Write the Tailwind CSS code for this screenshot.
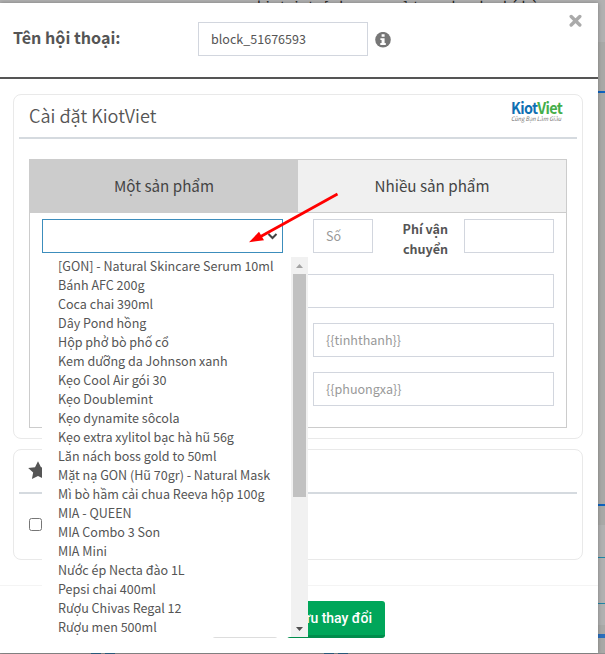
<!DOCTYPE html>
<html lang="vi">
<head>
<meta charset="utf-8">
<title>KiotViet</title>
<script src="https://cdn.jsdelivr.net/npm/@tailwindcss/browser@4"></script>
</head>
<body class="relative w-[605px] h-[654px] overflow-hidden bg-[#a9a9a7] text-[#555] font-['Noto_Sans_CJK_JP','Noto_Sans',sans-serif] text-[12.55px]">
<!-- dimmed page behind the dialog -->
<div class="absolute inset-x-0 top-0 h-[42px] bg-[#b1b1b1]"></div>
<div class="absolute left-[257px] top-[-3px] text-[14px] leading-[18px] tracking-[1.05px] text-[#222] whitespace-nowrap w-[300px]">kiotviet, [phuongxa] tạo nhanh phí hàng</div>
<div class="absolute right-0 top-[91px] w-[8px] h-[2px] bg-[#0d62bf]"></div>
<div class="absolute right-0 top-[504px] w-[8px] h-[2px] bg-[#0d62bf]"></div>
<div class="absolute right-0 top-[525px] w-[8px] h-[100px] bg-[#b1b1b1]"></div>
<div class="absolute right-0 top-[557px] w-[8px] h-px bg-[#2185a5]"></div>
<div class="absolute right-0 top-[603px] w-[8px] h-px bg-[#2185a5]"></div>
<div class="absolute right-0 top-[634px] w-[8px] h-[4px] bg-[#2c6fbd]"></div>
<div class="absolute left-0 top-[653px] w-[605px] h-px bg-[#929292]"></div>

<main class="relative mt-[3px] w-[598px] h-[650px] bg-white flex flex-col shadow-[0_0_4px_rgba(0,0,0,0.3)]">
  <header class="relative h-[76px] shrink-0 border-b-2 border-[#555] flex items-start pl-[13px]">
    <h1 class="w-[185px] pt-[21px] leading-[26px] text-[16.1px] font-bold whitespace-nowrap">Tên hội thoại:</h1>
    <div class="mt-[19px] w-[170px] h-[34px] border border-[#d2d6de] pl-3 leading-[31px]">block_51676593</div>
    <svg class="mt-[29px] ml-[7px]" width="16" height="16" viewBox="0 0 16 16"><circle cx="8" cy="7.700" r="7.8" fill="#777"/><path d="M6.6 2.2h3v2.5h-3zM5.4 6.2h4.2v4.9h1.2v1.9H5.3v-1.9h1.3V8H5.4z" fill="#fff"/></svg>
    <svg class="absolute left-[569px] top-[11px]" width="13" height="13" viewBox="0 0 13 13"><path d="M2.200 2.500l8.600 8.500M10.800 2.500l-8.600 8.500" stroke="#aaa" stroke-width="3.400" stroke-linecap="round"/></svg>
  </header>

  <section class="mt-[15px] ml-[13px] w-[570px] h-[345px] shrink-0 border border-[#e9e9e9] rounded-lg px-[5px]">
    <div class="h-[44px] border-b-2 border-[#d5dadf] flex justify-between pl-[10px] pr-[14px]">
      <h2 class="pt-[6px] leading-[28px] text-[18.1px] font-[350]">Cài đặt KiotViet</h2>
      <div class="pt-[5px] w-[52px]">
        <div class="w-[51px] text-[15.8px] leading-[16px] font-bold tracking-[-0.7px] text-[#0f70b3] whitespace-nowrap origin-left scale-x-[0.91]">Kiot<span class="text-[#45ae4b]">Viet</span></div>
        <div class="w-[50px] text-[6px] leading-[6px] italic text-[#777] whitespace-nowrap origin-left scale-x-[0.92]">Cùng Bạn Làm Giàu</div>
      </div>
    </div>
    <div class="mt-[20px] ml-[10px] w-[538px] h-[269px] border border-[#ccc]">
      <div class="flex h-[53px] border-b border-[#ccc] bg-[#f0f0f0] text-[15.2px] text-[#444] leading-[51px] text-center">
        <div class="w-[268px] h-[53px] bg-[#ccc]">Một sản phẩm</div>
        <div class="w-[268px]">Nhiều sản phẩm</div>
      </div>
      <div class="pl-[12px] pt-[6px]">
        <div class="flex">
          <div class="w-[241px] h-[34px] border border-[#3c8dbc] flex items-center justify-end pr-[4px]">
            <svg width="11" height="8" viewBox="0 0 11 8"><path d="M1.5 2l4 4 4-4" fill="none" stroke="#444" stroke-width="2"/></svg>
          </div>
          <div class="ml-[30px] w-[60px] h-[34px] border border-[#d2d6de] pl-3 leading-[31px] text-[#999]">Số</div>
          <div class="w-[75px] text-right font-bold leading-[20px]">Phí vận<br>chuyển</div>
          <div class="ml-[16px] w-[90px] h-[34px] border border-[#d2d6de]"></div>
        </div>
        <div class="mt-[15px] w-[512px] h-[34px] border border-[#d2d6de]"></div>
        <div class="mt-[15px] flex gap-[30px]">
          <div class="w-[241px] h-[34px] border border-[#d2d6de]"></div>
          <div class="w-[241px] h-[34px] border border-[#d2d6de] pl-3 leading-[31px] text-[#999]">{{tinhthanh}}</div>
        </div>
        <div class="mt-[15px] flex gap-[30px]">
          <div class="w-[241px] h-[34px] border border-[#d2d6de]"></div>
          <div class="w-[241px] h-[34px] border border-[#d2d6de] pl-3 leading-[31px] text-[#999]">{{phuongxa}}</div>
        </div>
      </div>
    </div>
  </section>

  <section class="mt-[10px] ml-[13px] w-[570px] h-[111px] shrink-0 border border-[#e9e9e9] rounded-lg px-[5px]">
    <div class="h-[44px] border-b-2 border-[#d5dadf] pl-[9px] pt-[11px]">
      <svg width="20" height="19" viewBox="0 0 24 24" preserveAspectRatio="none"><path fill="#555" d="M12 .2l3.600 7.600 8.200 1.100-6 5.700 1.500 8.200-7.300-4-7.300 4 1.500-8.200-6-5.700 8.200-1.100z"/></svg>
    </div>
    <div class="mt-[24px] ml-[10px] w-[13px] h-[13px] border border-[#767676] rounded-[2.5px]"></div>
  </section>

  <footer class="mt-[25px] border-t border-[#f4f4f4] flex pt-[15px] pl-[212px]">
    <div class="w-[66px] h-[37px] rounded-[3px] border border-[#ddd] bg-[#f4f4f4]"></div>
    <div class="ml-[9px] w-[98px] h-[37px] rounded-[3px] bg-[#00a65a] border-b-[3px] border-[#008d4c] text-white font-['Roboto',sans-serif] font-medium text-[14px] leading-[35px] text-right pr-[13px] whitespace-nowrap">Lưu thay đổi</div>
  </footer>
</main>

<!-- strip of the page below the dialog -->
<div class="absolute left-[91px] top-[653px] w-[10px] h-px bg-[#285878]"></div>
<div class="absolute left-[105px] top-[653px] w-[10px] h-px bg-[#285878]"></div>
<div class="absolute left-[324px] top-[653px] w-[10px] h-px bg-[#285878]"></div>
<div class="absolute left-[338px] top-[653px] w-[10px] h-px bg-[#285878]"></div>

<!-- open option list -->
<div class="absolute left-[42px] top-[257px] w-[266px] h-[380px] bg-white flex overflow-hidden">
  <ul class="-mt-px w-[249px] pl-[16px] leading-[19px] whitespace-nowrap">
    <li>[GON] - Natural Skincare Serum 10ml</li>
    <li>Bánh AFC 200g</li>
    <li>Coca chai 390ml</li>
    <li>Dây Pond hồng</li>
    <li>Hộp phở bò phố cổ</li>
    <li>Kem dưỡng da Johnson xanh</li>
    <li>Kẹo Cool Air gói 30</li>
    <li>Kẹo Doublemint</li>
    <li>Kẹo dynamite sôcola</li>
    <li>Kẹo extra xylitol bạc hà hũ 56g</li>
    <li>Lăn nách boss gold to 50ml</li>
    <li>Mặt nạ GON (Hũ 70gr) - Natural Mask</li>
    <li>Mì bò hầm cải chua Reeva hộp 100g</li>
    <li>MIA - QUEEN</li>
    <li>MIA Combo 3 Son</li>
    <li>MIA Mini</li>
    <li>Nước ép Necta đào 1L</li>
    <li>Pepsi chai 400ml</li>
    <li>Rượu Chivas Regal 12</li>
    <li>Rượu men 500ml</li>
  </ul>
  <div class="w-[17px] bg-[#f1f1f1] flex flex-col items-center">
    <svg class="shrink-0" width="17" height="17" viewBox="0 0 17 17"><path d="M5 11l3.5-4L12 11z" fill="#a3a3a3"/></svg>
    <div class="w-[13px] h-[223px] bg-[#c1c1c1]"></div>
    <svg class="mt-auto shrink-0" width="17" height="17" viewBox="0 0 17 17"><path d="M5 7l3.5 4L12 7z" fill="#505050"/></svg>
  </div>
</div>

<!-- pointer arrow -->
<svg class="absolute left-[240px] top-[185px]" width="110" height="65" viewBox="240 185 110 65"><path d="M337.500 194L258 238" stroke="#f00" stroke-width="2.800"/><path d="M249 242.300L259 231.800L264 240.200z" fill="#f00"/></svg>
</body>
</html>
